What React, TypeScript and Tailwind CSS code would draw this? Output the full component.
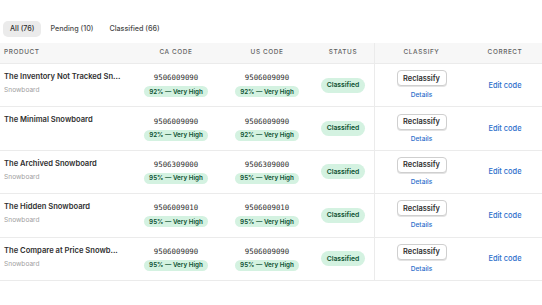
import React from "react";

type Row = { name: string; sub?: string; ca: string; us: string; conf: string };

const rows: Row[] = [
  { name: "The Inventory Not Tracked Sn...", sub: "Snowboard", ca: "9506009090", us: "9506009090", conf: "92% — Very High" },
  { name: "The Minimal Snowboard", ca: "9506009090", us: "9506009090", conf: "92% — Very High" },
  { name: "The Archived Snowboard", sub: "Snowboard", ca: "9506309000", us: "9506309000", conf: "95% — Very High" },
  { name: "The Hidden Snowboard", sub: "Snowboard", ca: "9506009010", us: "9506009010", conf: "95% — Very High" },
  { name: "The Compare at Price Snowb...", sub: "Snowboard", ca: "9506009090", us: "9506009090", conf: "95% — Very High" },
];

const cols = "grid grid-cols-[130px_92px_90px_62px_94px_74px]";

function Conf({ text }: { text: string }) {
  return (
    <span className="rounded-full bg-[#d4f2e1] px-[5px] h-[11px] flex items-center text-[6.3px] font-semibold text-[#0c5132] leading-none">
      {text}
    </span>
  );
}

function CodeCell({ code, conf }: { code: string; conf: string }) {
  return (
    <div className="flex flex-col items-center justify-center gap-[3px]">
      <span className="text-[7.4px] leading-[10px] text-[#303030]" style={{ fontFamily: '"DejaVu Sans Mono", monospace' }}>
        {code}
      </span>
      <Conf text={conf} />
    </div>
  );
}

export default function App() {
  return (
    <div className="w-[542px] h-[305px] bg-white overflow-hidden" style={{ fontFamily: "Inter, 'Noto Sans', sans-serif" }}>
      <div className="flex items-start gap-[2px] pl-[3px] pt-[21px] h-[43px]">
        <span className="h-[16px] px-[7px] rounded-[5px] bg-[#ebebeb] text-[7.2px] font-medium text-[#303030] flex items-center">All (76)</span>
        <span className="h-[16px] px-[7px] text-[7.2px] font-medium text-[#4a4a4a] flex items-center">Pending (10)</span>
        <span className="h-[16px] px-[7px] text-[7.2px] font-medium text-[#4a4a4a] flex items-center">Classified (66)</span>
      </div>
      <div className={`${cols} h-[21px] bg-[#f7f7f7] border-b border-[#ebebeb] text-[6.4px] tracking-[0.6px] text-[#616161] font-medium uppercase items-stretch`}>
        <div className="flex items-center pl-[4px]">Product</div>
        <div className="flex items-center justify-center">CA Code</div>
        <div className="flex items-center justify-center">US Code</div>
        <div className="flex items-center justify-center">Status</div>
        <div className="flex items-center justify-center border-l border-[#ebebeb]">Classify</div>
        <div className="flex items-center justify-center">Correct</div>
      </div>
      {rows.map((r, i) => (
        <div key={i} className={`${cols} h-[43.4px] border-b border-[#ebebeb]`}>
          <div className="flex flex-col pl-[4px] pt-[8px]">
            <span className="text-[7.6px] font-semibold text-[#303030] leading-[10px] whitespace-nowrap">{r.name}</span>
            {r.sub && <span className="text-[6.6px] text-[#9f9f9f] leading-[10px] mt-[3px]">{r.sub}</span>}
          </div>
          <CodeCell code={r.ca} conf={r.conf} />
          <CodeCell code={r.us} conf={r.conf} />
          <div className="flex items-center justify-center">
            <span className="rounded-full bg-[#d4f2e1] h-[15px] px-[6px] flex items-center text-[6.8px] font-semibold text-[#0c5132]">Classified</span>
          </div>
          <div className="flex flex-col items-center justify-center gap-[5px] border-l border-[#ebebeb]">
            <span className="h-[16px] w-[50px] rounded-[4px] border border-[#cfcfcf] bg-white flex items-center justify-center text-[7.4px] font-semibold text-[#303030] shadow-[0_1px_0_#e3e3e3]">Reclassify</span>
            <span className="text-[6.6px] text-[#2c6ecb] font-medium leading-[9px]">Details</span>
          </div>
          <div className="flex items-center justify-center">
            <span className="text-[7.4px] text-[#2c6ecb] font-medium">Edit code</span>
          </div>
        </div>
      ))}
    </div>
  );
}
